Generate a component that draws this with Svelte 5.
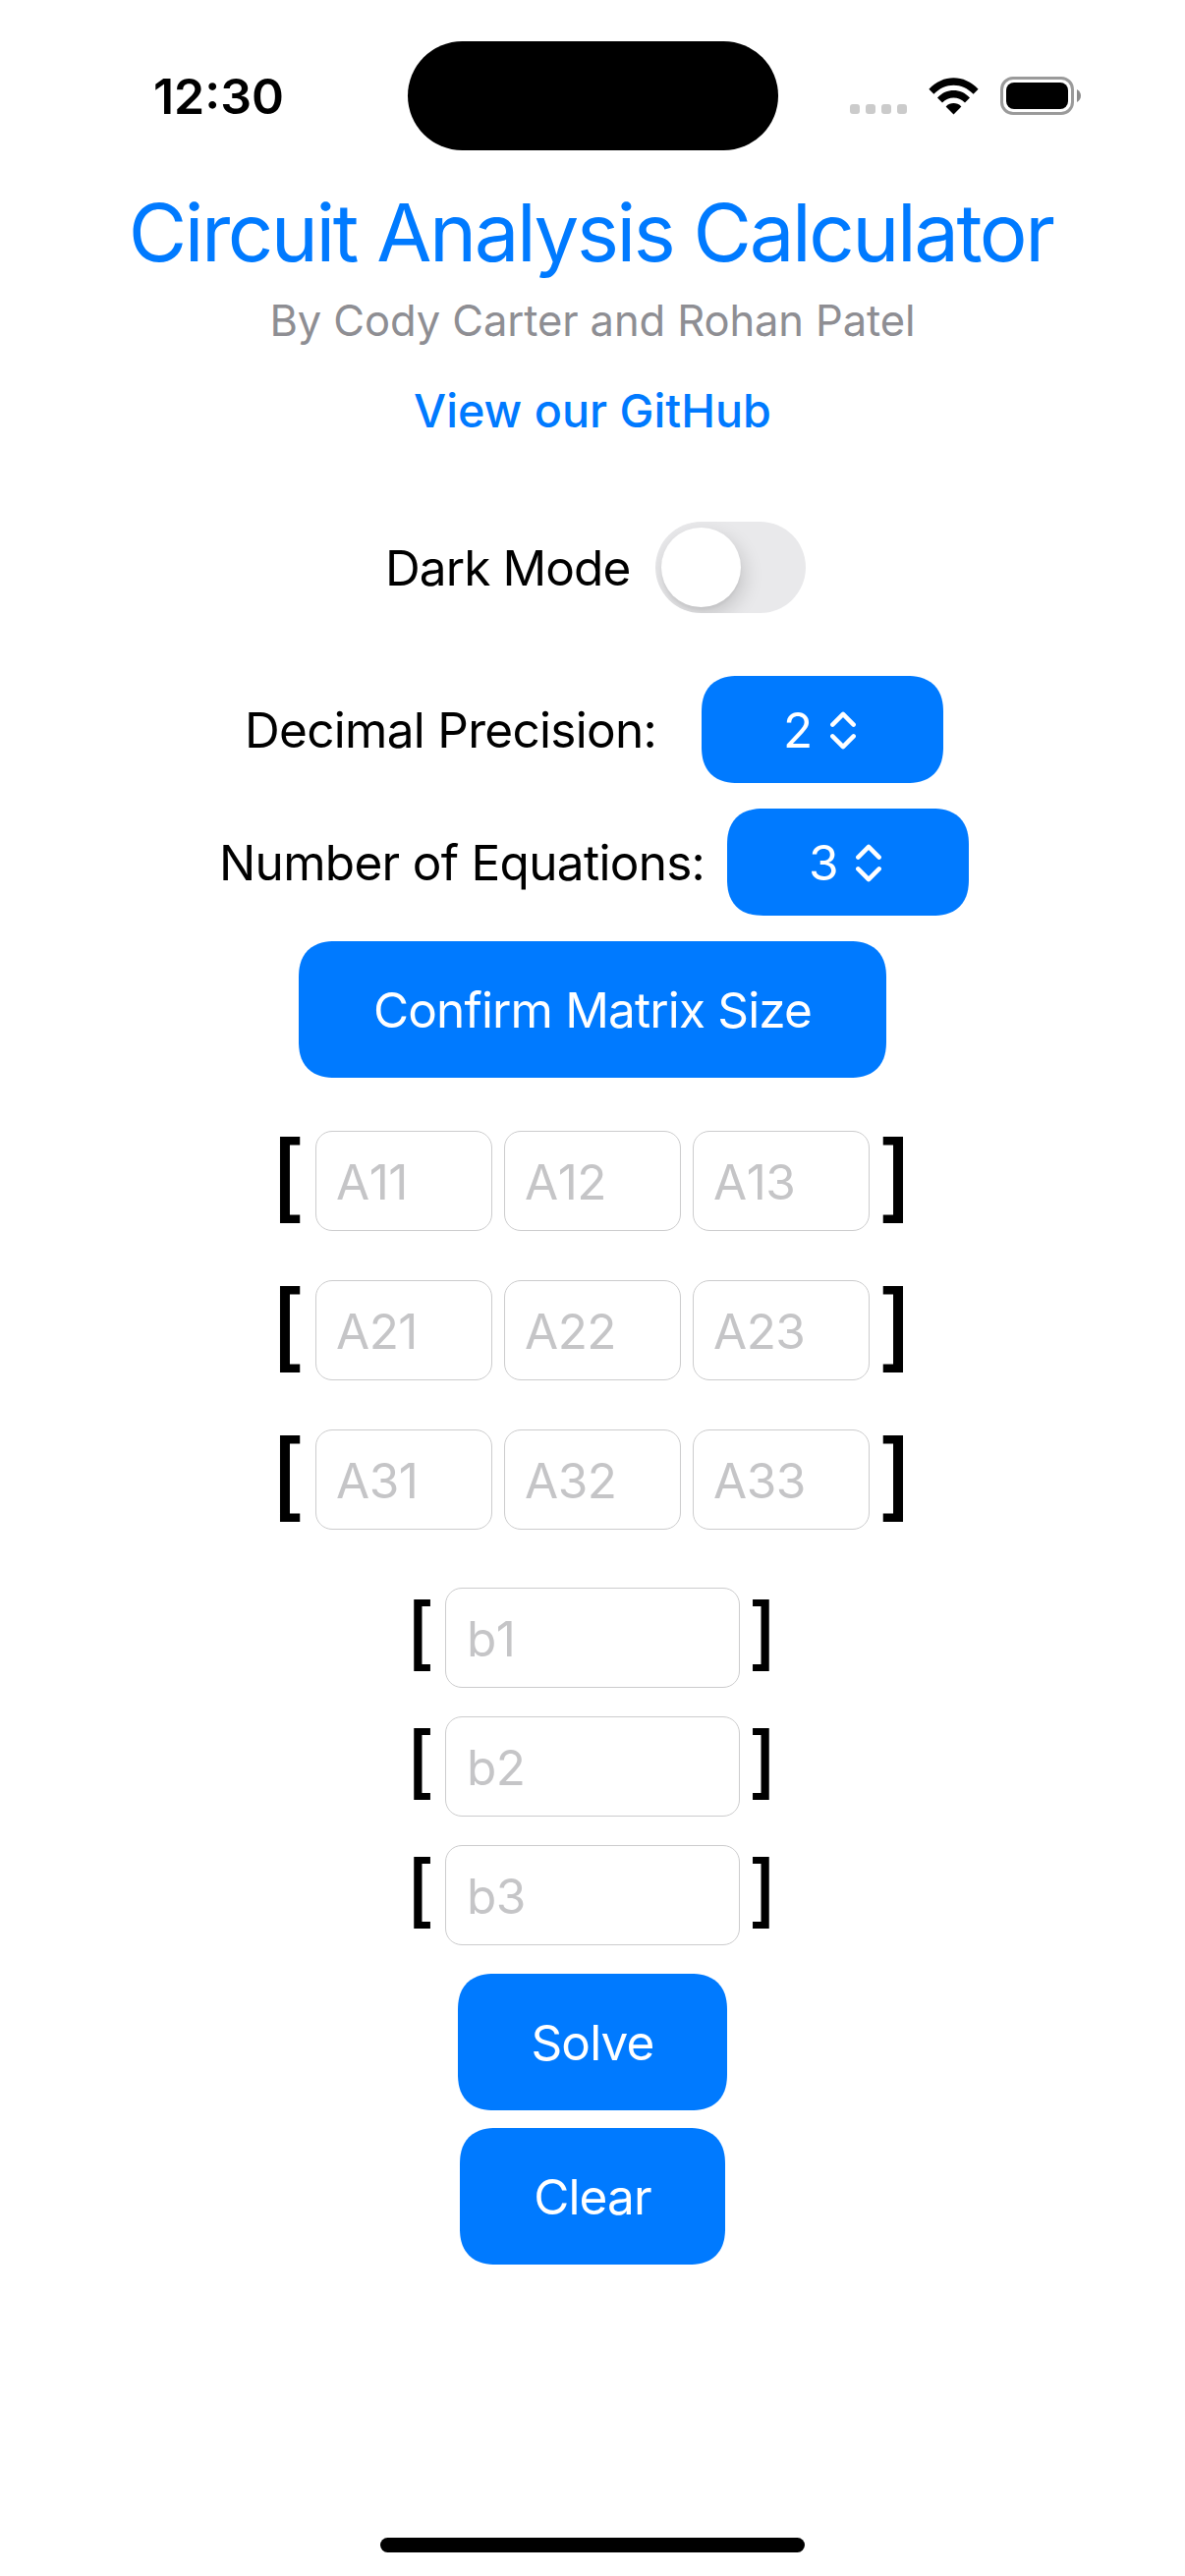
<script>
  let darkMode = $state(false);
  const size = 3;
  const indices = Array.from({ length: size }, (_, i) => i + 1);
  const pickers = [
    { label: 'Decimal Precision:', value: 2, name: 'precision' },
    { label: 'Number of Equations:', value: 3, name: 'equations' }
  ];
</script>

<div class="screen">
  <header class="status">
    <time class="clock">12:30</time>
    <div class="island"></div>
    <div class="indicators">
      <div class="cell"><i></i><i></i><i></i><i></i></div>
      <svg class="wifi" viewBox="0 0 51 38" width="51" height="38">
        <path d="M0.4 11.8C14.5-3.6 36.5-3.6 50.6 11.8L45.6 16.8C34.5 4.6 16.5 4.6 5.4 16.8Z" />
        <path d="M9 20.4C18.4 10.6 32.6 10.6 42 20.4L37 25.4C30.4 18.8 20.6 18.8 14 25.4Z" />
        <path d="M17.6 29.4C22.2 25 28.8 25 33.4 29.4L25.5 37.5Z" />
      </svg>
      <svg class="battery" viewBox="0 0 83 39" width="83" height="39">
        <rect x="1.5" y="1.5" width="72" height="36" rx="11.5" fill="none" stroke="#9a9a9a" stroke-width="3" />
        <rect x="6" y="6" width="63" height="27" rx="8" />
        <path d="M78 13C80.600 14.500 82 16.800 82 19.500S80.600 24.500 78 26Z" fill="#8c8c8c" />
      </svg>
    </div>
  </header>

  <main>
    <h1>Circuit Analysis Calculator</h1>
    <p class="authors">By Cody Carter and Rohan Patel</p>
    <a class="github" href="#github">View our GitHub</a>

    <div class="row dark-row">
      <span class="label dark">Dark Mode</span>
      <button class="switch" class:on={darkMode} role="switch" aria-checked={darkMode} aria-label="Dark Mode" onclick={() => (darkMode = !darkMode)}>
        <span class="knob"></span>
      </button>
    </div>

    <div class="pickers">
      {#each pickers as picker}
        <div class="row">
          <span class="label {picker.name}">{picker.label}</span>
          <button class="fill picker">
            <span class="digit">{picker.value}</span>
            <svg viewBox="0 0 28 40" width="28" height="40">
              <path d="M3.300 14.600 14 3.900 24.700 14.600M3.300 26.400 14 37.100 24.700 26.400" />
            </svg>
          </button>
        </div>
      {/each}
    </div>

    <button class="fill action confirm">Confirm Matrix Size</button>

    <div class="matrix">
      {#each indices as r}
        <div class="row">
          <span class="bracket big left">[</span>
          <div class="cells">
            {#each indices as c}
              <input placeholder="A{r}{c}" />
            {/each}
          </div>
          <span class="bracket big right">]</span>
        </div>
      {/each}
    </div>

    <div class="vector">
      {#each indices as r}
        <div class="row">
          <span class="bracket left">[</span>
          <input class="wide" placeholder="b{r}" />
          <span class="bracket right">]</span>
        </div>
      {/each}
    </div>

    <div class="actions">
      <button class="fill action solve">Solve</button>
      <button class="fill action clear">Clear</button>
    </div>
  </main>

  <div class="home"></div>
</div>

<style>
  :global(body) {
    background: #fff;
  }
  .screen {
    width: 1206px;
    height: 2622px;
    box-sizing: border-box;
    display: flex;
    flex-direction: column;
    align-items: center;
    padding-bottom: 24px;
    background: #fff;
    color: #000;
    font-family: Inter, 'Liberation Sans', sans-serif;
    font-size: 49.5px;
    overflow: hidden;
  }
  button,
  input {
    font: inherit;
    border: 0;
    padding: 0;
    margin: 0;
    box-sizing: border-box;
  }
  .status {
    width: 100%;
    height: 186px;
    box-sizing: border-box;
    padding: 42px 106px 33px 0;
    display: grid;
    grid-template-columns: 415px 377px 1fr;
    align-items: center;
  }
  .clock {
    padding-left: 30px;
    text-align: center;
    font-size: 50px;
    font-weight: 600;
    line-height: 60px;
  }
  .island {
    height: 111px;
    border-radius: 56px;
    background: #000;
  }
  .indicators {
    display: flex;
    align-items: center;
    justify-content: flex-end;
    margin-right: -1px;
  }
  .cell {
    display: flex;
    gap: 6px;
    padding-top: 27px;
    margin-right: 22px;
  }
  .cell i {
    width: 10px;
    height: 10px;
    border-radius: 3px;
    background: #cbcbcb;
  }
  .battery {
    margin-left: 22px;
  }
  main {
    flex: 1;
    display: flex;
    flex-direction: column;
    align-items: center;
    white-space: nowrap;
  }
  h1 {
    margin: 0;
    padding-right: 4px;
    font-size: 81.5px;
    font-weight: 400;
    line-height: 101px;
    letter-spacing: -2.5px;
    color: #007aff;
  }
  .authors {
    margin: 12px 0 0;
    font-size: 43.5px;
    line-height: 55px;
    letter-spacing: -0.1px;
    color: #8e8e93;
  }
  .github {
    margin-top: 35px;
    font-size: 46.7px;
    font-weight: 500;
    line-height: 58px;
    color: #007aff;
    text-decoration: none;
  }
  .row {
    display: flex;
    align-items: center;
    justify-content: center;
  }
  .label {
    line-height: 60px;
    box-sizing: border-box;
    letter-spacing: -0.7px;
  }
  .dark-row {
    margin-top: 84px;
  }
  .label.dark {
    width: 281px;
    padding-left: 6px;
    letter-spacing: -0.9px;
  }
  .switch {
    width: 153px;
    height: 93px;
    padding: 6px;
    border-radius: 47px;
    background: #e9e9eb;
    display: flex;
    overflow: hidden;
  }
  .switch.on {
    justify-content: flex-end;
    background: #34c759;
  }
  .knob {
    width: 81px;
    height: 81px;
    border-radius: 50%;
    background: #fff;
    box-shadow: 3px 8px 20px rgba(0, 0, 0, 0.16), 0 3px 3px rgba(0, 0, 0, 0.04);
  }
  .pickers {
    margin-top: 64px;
    display: flex;
    flex-direction: column;
    gap: 26px;
  }
  .label.precision {
    width: 468px;
    padding-left: 3px;
  }
  .label.equations {
    width: 520px;
    padding-left: 3px;
  }
  .fill {
    background: #007aff;
    color: #fff;
    border-radius: 30px;
  }
  @supports (corner-shape: squircle) {
    .fill {
      border-radius: 37px;
      corner-shape: superellipse(1.25);
    }
  }
  .picker {
    width: 246px;
    height: 109px;
    display: flex;
    align-items: center;
    padding-left: 83px;
  }
  .digit {
    width: 47px;
    text-align: left;
  }
  .picker svg {
    fill: none;
    stroke: #fff;
    stroke-width: 4.5;
    stroke-linecap: round;
    stroke-linejoin: round;
  }
  .action {
    height: 139px;
    text-align: center;
    letter-spacing: -0.85px;
  }
  .confirm {
    width: 598px;
    margin-top: 26px;
  }
  .matrix {
    margin-top: 54px;
    display: flex;
    flex-direction: column;
    gap: 50px;
  }
  .cells {
    display: flex;
    gap: 12px;
  }
  input {
    width: 180px;
    height: 102px;
    padding: 1px 20px 0;
    border: 1px solid #cccccd;
    border-radius: 17px;
    background: #fff;
    color: #000;
    letter-spacing: -0.5px;
    font-kerning: none;
    outline: none;
  }
  input.wide {
    width: 300px;
    padding-left: 21px;
  }
  input::placeholder {
    color: #c5c5c7;
    opacity: 1;
  }
  .bracket {
    width: 40px;
    height: 75px;
    margin-bottom: 13px;
    box-sizing: border-box;
    font-size: 80px;
    line-height: 75px;
    font-weight: 500;
  }
  .bracket.left {
    text-align: left;
  }
  .bracket.right {
    padding-right: 2px;
    text-align: right;
  }
  .bracket.big {
    width: 46px;
    height: 90px;
    margin-bottom: 10px;
    font-size: 97px;
    line-height: 90px;
    font-weight: 500;
  }
  .vector {
    margin-top: 59px;
    display: flex;
    flex-direction: column;
    gap: 29px;
  }
  .actions {
    margin-top: 29px;
    display: flex;
    flex-direction: column;
    align-items: center;
    gap: 18px;
  }
  .solve {
    width: 274px;
  }
  .clear {
    width: 270px;
  }
  .home {
    width: 432px;
    height: 15px;
    border-radius: 8px;
    background: #000;
  }
</style>
